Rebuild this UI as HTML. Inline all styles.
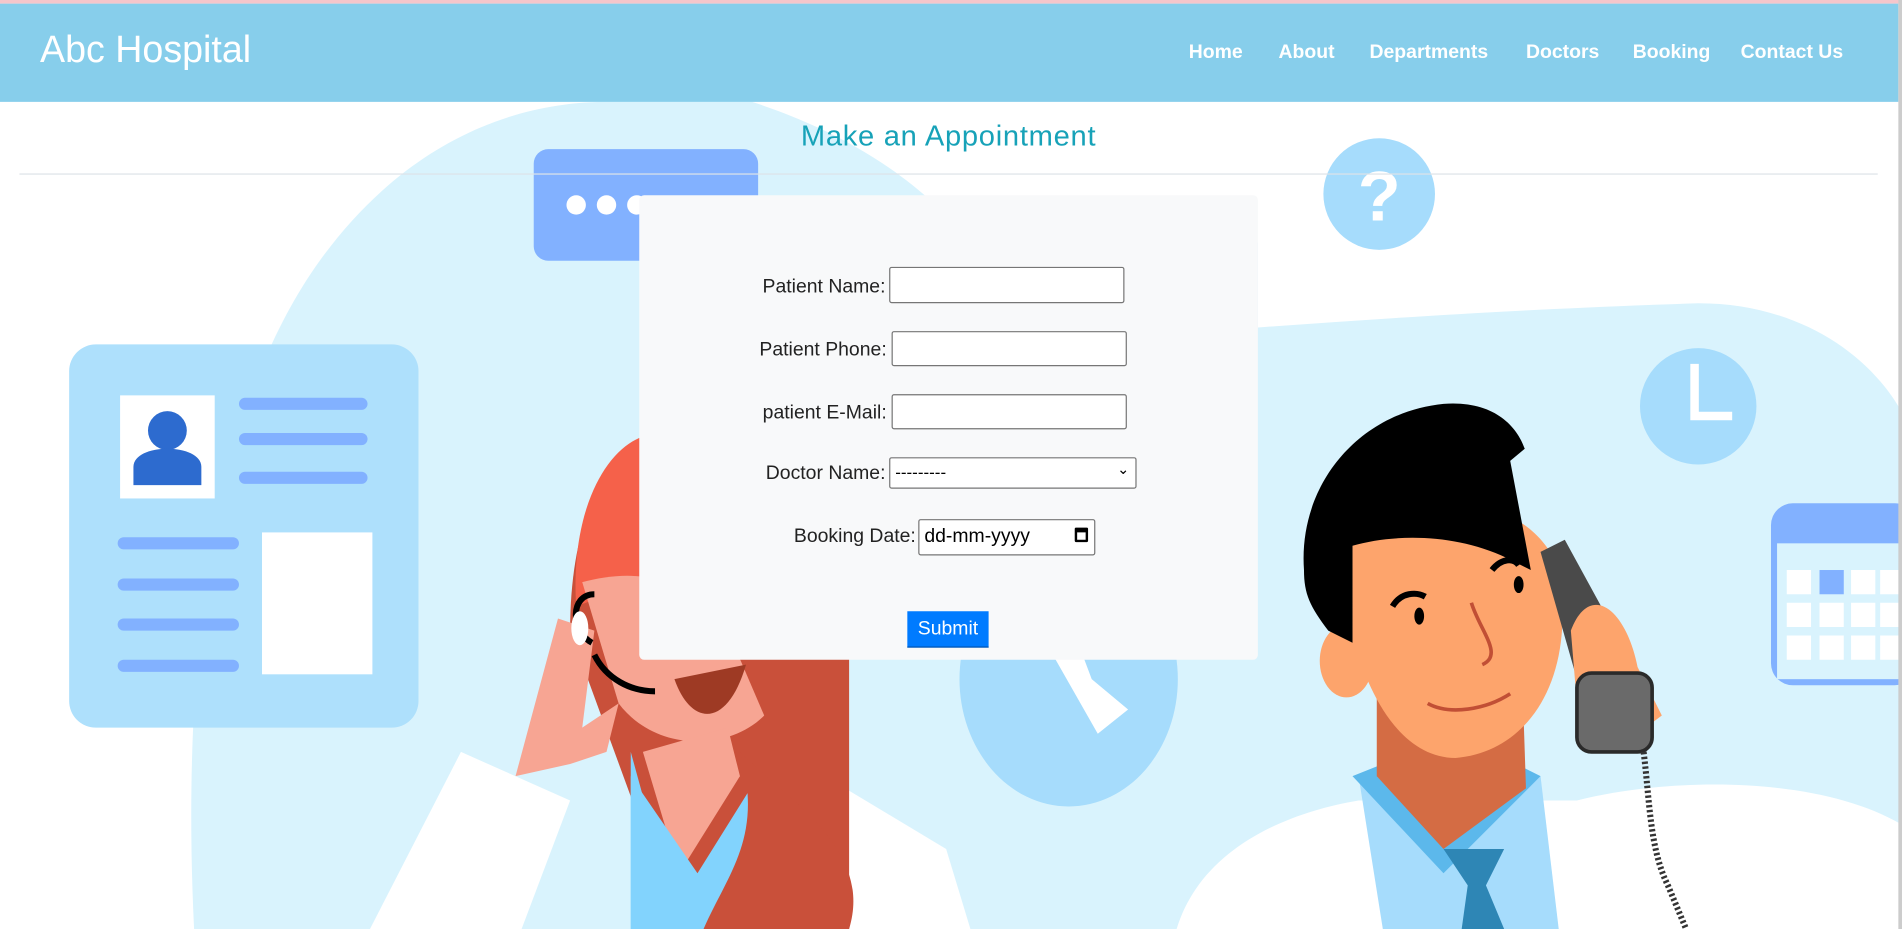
<!DOCTYPE html>
<html><head><meta charset="utf-8"><style>
html,body{margin:0;padding:0;width:1902px;height:929px;overflow:hidden;background:#fff}
#w{position:absolute;left:0;top:0;width:1568px;height:766px;transform:scale(1.21301,1.21279);transform-origin:0 0;font-family:"Liberation Sans",sans-serif}
svg{position:absolute;left:0;top:0}
.hdr{position:absolute;left:0;top:3px;width:1565px;height:81px;background:#87ceeb}
.pink{position:absolute;left:0;top:0;width:1568px;height:3px;background:#f5c6cb}
.logo{position:absolute;left:33px;top:23px;color:#fff;font-size:31px}
.nav{position:absolute;top:35px;color:#fff;font-weight:bold;font-size:16px}
h2{position:absolute;left:0;width:1564px;top:99px;margin:0;text-align:center;color:#17a2b8;font-size:24px;font-weight:normal;letter-spacing:0.6px}
.hr{position:absolute;left:16px;width:1532px;top:143px;height:1px;background:#dde3e8}
.card{position:absolute;left:527px;top:161px;width:510px;height:383px;background:#f8f9fa;border-radius:4px}
.lab{position:absolute;color:#222;font-size:16px;text-align:right}
.inp{position:absolute;background:#fff;border:1px solid #767676;border-radius:2px;box-sizing:border-box;font-size:15px;color:#000}
.btn{position:absolute;left:748px;top:504px;width:67px;height:30px;background:#007bff;color:#fff;font-size:16px;text-align:center;line-height:30px;border-bottom:1px solid #0056b3;box-sizing:border-box}
</style></head><body><div id="w">
<svg width="1568" height="766" viewBox="0 0 1568 766">
<path d="M160 766 C150 560 170 350 260 220 C330 120 420 84 500 84 L620 84 C700 110 760 150 800 200 L1037 200 L1037 270 C1150 262 1250 255 1400 250 C1480 250 1540 290 1568 340 L1568 766 Z" fill="#d9f3fd"/>
<rect x="440" y="123" width="185" height="92" rx="12" fill="#82b1ff"/>
<circle cx="475" cy="169" r="8" fill="#fff"/><circle cx="500" cy="169" r="8" fill="#fff"/><circle cx="525" cy="169" r="8" fill="#fff"/>
<circle cx="1137" cy="160" r="46" fill="#a6dcfc"/>
<text x="1137" y="182" font-size="58" font-weight="bold" fill="#fff" text-anchor="middle" font-family="Liberation Sans">?</text>
<circle cx="1400" cy="335" r="48" fill="#a6dcfc"/>
<path d="M1397 300 V343 H1428" stroke="#fff" stroke-width="7" fill="none"/>
<rect x="1460" y="415" width="120" height="150" rx="18" fill="#82b1ff"/>
<rect x="1465" y="448" width="110" height="112" fill="#d9f3fd"/>
<g fill="#fff"><rect x="1473" y="470" width="20" height="20"/><rect x="1526" y="470" width="20" height="20"/><rect x="1550" y="470" width="20" height="20"/>
<rect x="1473" y="497" width="20" height="20"/><rect x="1500" y="497" width="20" height="20"/><rect x="1526" y="497" width="20" height="20"/><rect x="1550" y="497" width="20" height="20"/>
<rect x="1473" y="524" width="20" height="20"/><rect x="1500" y="524" width="20" height="20"/><rect x="1526" y="524" width="20" height="20"/><rect x="1550" y="524" width="20" height="20"/></g>
<rect x="1500" y="470" width="20" height="20" fill="#82b1ff"/>
<rect x="57" y="284" width="288" height="316" rx="22" fill="#aee0fc"/>
<rect x="99" y="326" width="78" height="85" fill="#fff"/>
<circle cx="138" cy="355" r="16" fill="#2d6bcf"/><path d="M110 400 V385 C110 365 166 365 166 385 V400 Z" fill="#2d6bcf"/>
<g fill="#82b1ff"><rect x="197" y="328" width="106" height="10" rx="5"/><rect x="197" y="357" width="106" height="10" rx="5"/><rect x="197" y="389" width="106" height="10" rx="5"/>
<rect x="97" y="443" width="100" height="10" rx="5"/><rect x="97" y="477" width="100" height="10" rx="5"/><rect x="97" y="510" width="100" height="10" rx="5"/><rect x="97" y="544" width="100" height="10" rx="5"/></g>
<rect x="216" y="439" width="91" height="117" fill="#fff"/>
<ellipse cx="881" cy="560" rx="90" ry="105" fill="#a6dcfc"/>
<path d="M868 540 L905 605 L930 585 L900 560 L885 520 Z" fill="#fff"/>
<path d="M305 766 L380 620 L470 660 L430 766 Z" fill="#fff"/>
<path d="M680 640 L780 700 L800 766 L640 766 Z" fill="#fff"/>
<path d="M470 520 C470 400 520 350 560 360 L700 540 L700 766 L560 766 Z" fill="#c9503a"/>
<path d="M475 500 C470 420 500 370 530 360 L528 480 Z" fill="#f5614a"/>
<path d="M480 480 C520 470 560 470 600 520 L630 590 C600 620 540 620 510 580 Z" fill="#f7a593"/>
<path d="M520 620 L560 766 L520 766 Z" fill="#82d3fd"/>
<path d="M530 620 L560 720 L610 640 L600 600 Z" fill="#f7a593"/>
<path d="M520 640 L575 720 L625 640 L640 766 L520 766 Z" fill="#82d3fd"/>
<path d="M610 620 C650 660 720 700 700 766 L580 766 C600 720 630 690 610 620 Z" fill="#c9503a"/>
<path d="M556 560 C570 600 600 600 615 548 Z" fill="#9e3a24"/>
<path d="M425 640 L460 510 L490 520 L480 600 L510 580 L500 620 L470 630 Z" fill="#f7a593"/>
<path d="M488 530 C470 520 470 490 490 490 M490 540 C500 560 520 570 540 570" stroke="#000" stroke-width="5" fill="none"/>
<ellipse cx="478" cy="518" rx="7" ry="14" fill="#fff"/>
<path d="M970 766 C990 700 1060 670 1120 660 L1300 660 C1380 640 1500 640 1568 680 L1568 766 Z" fill="#fff"/>
<path d="M1120 640 L1270 640 L1285 766 L1140 766 Z" fill="#a6dcfc"/>
<path d="M1115 640 L1190 720 L1270 640 L1250 630 L1140 630 Z" fill="#5cb8eb"/>
<path d="M1190 700 L1240 700 L1225 730 L1240 766 L1205 766 L1210 730 Z" fill="#2e86b5"/>
<path d="M1135 560 L1255 560 L1258 650 L1190 700 L1135 640 Z" fill="#d46c44"/>
<path d="M1110 440 C1150 400 1260 400 1285 470 C1300 560 1260 620 1200 625 C1150 625 1120 560 1110 500 Z" fill="#fda46c"/>
<ellipse cx="1110" cy="545" rx="22" ry="30" fill="#fda46c"/>
<path d="M1075 470 C1070 400 1120 340 1190 333 C1230 330 1250 350 1257 370 L1245 380 L1262 470 L1242 460 C1200 440 1150 440 1115 450 L1115 530 L1095 520 C1080 500 1075 490 1075 470 Z" fill="#000"/>
<path d="M1148 500 C1155 488 1168 488 1175 492 M1230 470 C1238 460 1248 460 1252 466" stroke="#000" stroke-width="5" fill="none"/>
<ellipse cx="1170" cy="508" rx="4" ry="7" fill="#000"/><ellipse cx="1252" cy="482" rx="4" ry="7" fill="#000"/>
<path d="M1213 497 C1220 520 1240 540 1222 548 M1177 580 C1195 590 1225 585 1245 572" stroke="#c14f35" stroke-width="3" fill="none"/>
<path d="M1270 455 L1290 445 L1320 500 L1330 560 L1300 560 Z" fill="#4a4a4a"/>
<path d="M1295 520 C1310 480 1340 500 1350 550 L1370 590 L1330 620 L1300 580 Z" fill="#fda46c"/>
<rect x="1300" y="555" width="62" height="65" rx="12" fill="#6a6a6a" stroke="#2a2a2a" stroke-width="3"/>
<path d="M1355 620 C1360 660 1360 700 1375 730 L1390 766" stroke="#333" stroke-width="5" fill="none" stroke-dasharray="2 2"/>
</svg>
<div class="pink"></div>
<div class="hdr"></div>
<div style="position:absolute;left:1565px;top:0;width:3px;height:766px;background:#ccc"></div>
<div class="logo">Abc Hospital</div>
<div class="nav" style="left:980px">Home</div>
<div class="nav" style="left:1054px">About</div>
<div class="nav" style="left:1129px">Departments</div>
<div class="nav" style="left:1258px">Doctors</div>
<div class="nav" style="left:1346px">Booking</div>
<div class="nav" style="left:1435px">Contact Us</div>
<h2>Make an Appointment</h2>
<div class="hr"></div>
<div class="card"></div>
<div class="lab" style="right:838px;top:228px">Patient Name:</div>
<div class="inp" style="left:733px;top:220px;width:194px;height:30px"></div>
<div class="lab" style="right:837px;top:280px">Patient Phone:</div>
<div class="inp" style="left:735px;top:273px;width:194px;height:29px"></div>
<div class="lab" style="right:837px;top:332px">patient E-Mail:</div>
<div class="inp" style="left:735px;top:325px;width:194px;height:29px"></div>
<div class="lab" style="right:838px;top:382px">Doctor Name:</div>
<div class="inp" style="left:733px;top:377px;width:204px;height:26px;padding:3px 4px;font-size:14px">---------<span style="position:absolute;right:5px;top:2px;font-size:12px">&#8964;</span></div>
<div class="lab" style="right:813px;top:434px">Booking Date:</div>
<div class="inp" style="left:757px;top:428px;width:146px;height:30px;padding:5px 4px;font-size:16px">dd-mm-yyyy<span style="position:absolute;right:5px;top:6px;width:11px;height:12px;border:2px solid #000;border-top-width:4px;border-radius:1px;box-sizing:border-box"></span></div>
<div class="btn">Submit</div>
</div></body></html>
